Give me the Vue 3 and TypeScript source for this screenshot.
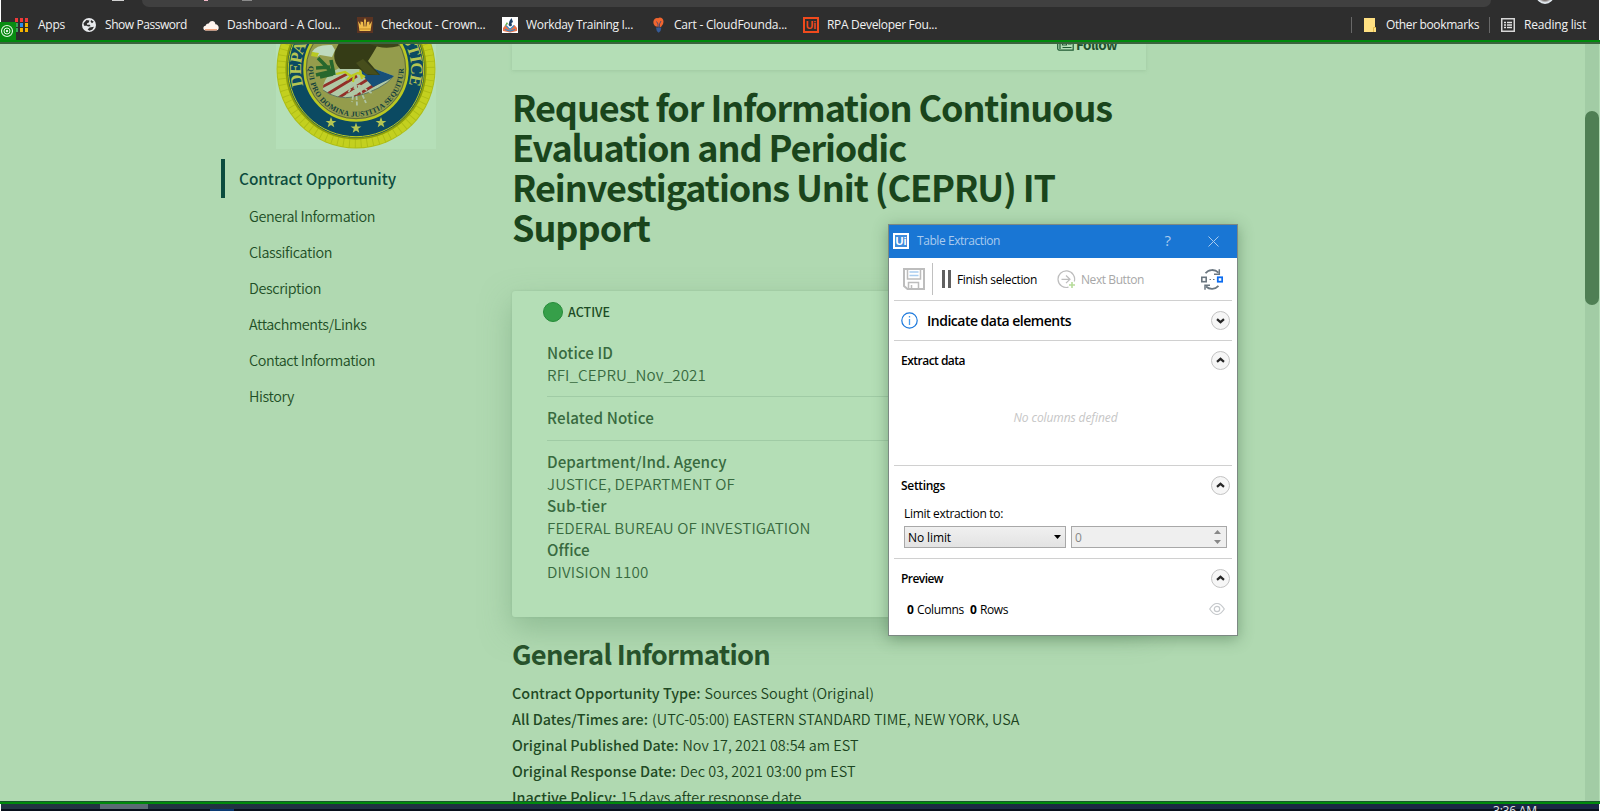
<script setup lang="ts">
import type { Directive } from 'vue'

interface Field { label: string; lw: number; value: string; vw: number }

// Tracks a line of text out or in so that it spans the given width.
const vFit: Directive<HTMLElement, number> = {
  mounted(el, { value }) {
    const count = (el.textContent ?? '').length
    const natural = el.getBoundingClientRect().width
    if (count > 0) el.style.letterSpacing = `${(value - natural) / count}px`
  },
}

const sections = [
  { name: 'General Information', w: 126 },
  { name: 'Classification', w: 83 },
  { name: 'Description', w: 72 },
  { name: 'Attachments/Links', w: 117.5 },
  { name: 'Contact Information', w: 126 },
  { name: 'History', w: 45 },
]

const titleLines = [
  { text: 'Request for Information Continuous', w: 600 },
  { text: 'Evaluation and Periodic', w: 394 },
  { text: 'Reinvestigations Unit (CEPRU) IT', w: 543 },
  { text: 'Support', w: 138 },
]

const agency: Field[] = [
  { label: 'Department/Ind. Agency', lw: 179.5, value: 'JUSTICE, DEPARTMENT OF', vw: 188 },
  { label: 'Sub-tier', lw: 59.5, value: 'FEDERAL BUREAU OF INVESTIGATION', vw: 263.5 },
  { label: 'Office', lw: 42.5, value: 'DIVISION 1100', vw: 101.5 },
]

const facts: Field[] = [
  { label: 'Contract Opportunity Type:', lw: 188.5, value: 'Sources Sought (Original)', vw: 169.5 },
  { label: 'All Dates/Times are:', lw: 136, value: '(UTC-05:00) EASTERN STANDARD TIME, NEW YORK, USA', vw: 367.5 },
  { label: 'Original Published Date:', lw: 166.5, value: 'Nov 17, 2021 08:54 am EST', vw: 176 },
  { label: 'Original Response Date:', lw: 164, value: 'Dec 03, 2021 03:00 pm EST', vw: 175.5 },
  { label: 'Inactive Policy:', lw: 104.5, value: '15 days after response date', vw: 181 },
]

const appColors = ['#f03a3a', '#f03a3a', '#f03a3a', '#3aa757', '#2a8cf0', '#f5b400', '#3aa757', '#f5b400', '#f5b400']
const stars = [[55, 133.5], [80, 139], [105, 133.5]]
const starPath = 'M0-5.5 1.4-1.6 5.4-1.6 2.2.8 3.3 4.7 0 2.4-3.3 4.7-2.2.8-5.4-1.6-1.4-1.6Z'
</script>

<template>
  <div class="screen">
    <header class="browser">
      <div class="toolbar">
        <i class="home"></i>
        <div class="address"><i class="mark"></i><i class="dots"></i></div>
        <i class="avatar"></i>
      </div>
      <nav class="bookmarks">
        <a class="bm apps">
          <svg width="13" height="14" viewBox="0 0 13 14">
            <rect v-for="(c, i) in appColors" :key="i" :x="(i % 3) * 5" :y="Math.floor(i / 3) * 5" width="3" height="4" :fill="c" />
          </svg><span v-fit="27">Apps</span>
        </a>
        <a class="bm show">
          <svg width="14" height="14" viewBox="0 0 14 14"><circle cx="7" cy="7" r="7" fill="#e8eaed" /><path d="M1.500 5.200 4.500 2 7.400 2.600 6.800 4.600 4.900 5.500 5.100 6.800 7.900 6.700 8.500 8.300 6 8.600 4.900 7.800 2 7.700ZM9 2l2.800 1.800L10 5.200 8.600 3.800ZM7.500 9.500l4.500-.8-1.600 2.900L7.500 12.700 5.600 11.500Z" fill="#2e2e2e" /></svg>
          <span v-fit="82">Show Password</span>
        </a>
        <a class="bm dash">
          <svg width="16" height="11" viewBox="0 0 16 11"><path d="M3 10.500C-.6 10.500-.3 6 2.600 5.800 3.200 3.800 4.800 3.200 5.800 3.600 7.400-.2 12.200.6 12.400 4.200 16.600 4.400 16.800 10.500 13 10.500Z" fill="#fff4ee" /><path d="M2 9.700h12" stroke="#f0a27c" stroke-width="1.400" /></svg>
          <span v-fit="113.5">Dashboard - A Clou...</span>
        </a>
        <a class="bm crown">
          <svg width="16" height="16" viewBox="0 0 16 16"><rect width="16" height="16" fill="#5b3422" /><path d="M1 4 3.600 8 3.600 4.500 6 5 6.600 9.500 7.400 9.500 7 3.500 8 1 9 3.500 8.600 9.500 9.400 9.500 10 5 12.400 4.500 12.400 8 15 4 13.500 14h-11Z" fill="#f2bd4b" /><path d="M2.500 12h11" stroke="#c58a24" /></svg>
          <span v-fit="104.5">Checkout - Crown...</span>
        </a>
        <a class="bm work">
          <svg width="16" height="16" viewBox="0 0 16 16"><rect width="16" height="16" fill="#fff" /><path d="M1 11 3.500 8l4.500 5 4.500-5 2.500 3v3L8 15.500 1 14Z" fill="#e8734a" /><path d="m3 12.500 5 1.500 5-1.500M4 8.500l4 4 4-4" stroke="#3b8ac4" stroke-width="1.200" fill="none" /><path d="M6.500 8 7.500 4 9.500 1l1.500 4-1.500 1 .5 2.500L8 9.500Z" fill="#1d4066" /><path d="m2.500 9 2.500-4 1 2Z" fill="#5da845" /></svg>
          <span v-fit="107">Workday Training I...</span>
        </a>
        <a class="bm cart">
          <svg width="11" height="16" viewBox="0 0 11 16"><path d="M3 9.500C.5 8 0 5.500.6 3.800 1.200 1.500 3.500.4 5 1.200 7-.3 10.400 1 10.500 4.500 10.500 7 9 8.500 8 10Z" fill="#f0652f" /><path d="M3.500 4.500 5 7v3h1.500V7L8 4" stroke="#5c4a65" fill="none" /><path d="M3 10.500h5.300L7.500 14 5.600 15.800 3.800 14Z" fill="#365a96" /></svg>
          <span v-fit="113">Cart - CloudFounda...</span>
        </a>
        <a class="bm rpa">
          <span class="ui-red">Ui</span><span v-fit="110">RPA Developer Fou...</span>
        </a>
        <div class="right">
          <a class="bm other">
            <svg width="12" height="14" viewBox="0 0 12 14"><path d="M0 0h11v9h1v5H0Z" fill="#ffe082" /><path d="M9.500 14V9.500H12" stroke="#e0b94b" fill="none" /></svg>
            <span v-fit="93">Other bookmarks</span>
          </a>
          <a class="bm reading">
            <svg width="14" height="14" viewBox="0 0 14 14"><rect x=".75" y=".75" width="12.500" height="12.500" fill="none" stroke="#d7d7d7" stroke-width="1.500" /><path d="M3 4.500h2M3 7h2M3 9.500h2M6 4.500h5M6 7h5M6 9.500h5" stroke="#e4e4e4" stroke-width="1.300" /></svg>
            <span v-fit="62">Reading list</span>
          </a>
        </div>
      </nav>
      <svg class="target" width="16" height="18" viewBox="0 0 16 18"><rect width="16" height="18" fill="#098c12" /><g fill="none" stroke="#e4f5e4"><circle cx="7" cy="9" r="5.500" stroke-width="1.100" /><circle cx="7" cy="9" r="3" /></g><circle cx="7" cy="9" r="1.200" fill="#e4f5e4" /></svg>
    </header>
    <div class="edge top"></div>

    <div class="page">
      <aside>
        <div class="seal">
          <svg width="160" height="160" viewBox="0 0 160 160">
            <defs>
              <path id="outer-arc" d="M27.500 96.500A55 55 0 1 1 132.500 96.500" />
              <path id="inner-arc" d="M32.500 77A47.600 47.600 0 1 0 127.500 77" />
              <clipPath id="shield-clip"><path d="M47 101Q46 82 80 73L118 87Q106 101 78 108 60 111 47 101Z" /></clipPath>
            </defs>
            <rect width="160" height="160" fill="#b5dfb8" />
            <circle cx="80" cy="80" r="79.500" fill="#aebd16" />
            <circle cx="80" cy="80" r="74.500" fill="none" stroke="#c3d01f" stroke-width="8" stroke-dasharray="5 .9" />
            <circle cx="80" cy="80" r="69.500" fill="#0b4a62" stroke="#8d9e0b" stroke-width="2" />
            <circle cx="80" cy="80" r="67.700" fill="none" stroke="#bccb21" />
            <circle cx="80" cy="80" r="51.500" fill="#949c4c" stroke="#bac821" stroke-width="2.500" />
            <circle cx="80" cy="80" r="49.700" fill="none" stroke="#46592c" stroke-width=".7" />
            <text class="outer"><textPath href="#outer-arc" textLength="205" lengthAdjust="spacing">DEPARTMENT OF JUSTICE</textPath></text>
            <g clip-path="url(#shield-clip)">
              <rect x="40" y="65" width="80" height="50" fill="#b0c9a6" />
              <path d="m42 100 29-15m-23 22 33-20m-22 24 35-22m-24 24 40-24m-26 22 34-19" stroke="#922f28" stroke-width="2.700" />
              <path d="M82 65 125 72 118 88 97 98 86 86Z" fill="#174f79" />
            </g>
            <path d="M47 101Q60 111 78 108 106 101 118 87" fill="none" stroke="#5f7960" />
            <path d="M59 62 66 48 106 48Q98 63 92 72L104 86 92 86 83 80 64 80Q56 71 59 62Z" fill="#353c16" />
            <path d="M88 52Q104 62 123 57L121 51H90Z" fill="#3d4519" />
            <path d="m80 74 7-4 16 16-13-1Z" fill="#474e1c" />
            <path d="M36 63Q40 55 56 56L59 61 56 68 44 66 41 68 42 65Z" fill="#bed9bd" />
            <path d="m36 63 7 1-2 4-6-1Z" fill="#b9ca22" />
            <path d="m42 69 6 6 10 11m-3-15 3 15M40 79l14-1m-14 8 17-4m-13 6 13-3" stroke="#27672d" stroke-width="3.600" fill="none" />
            <path d="m60 85 9-2 6 4-4 4m4-4 7-3 7 4m-11-2-1 7m7-12 2 9" stroke="#bdca20" stroke-width="2.200" fill="none" />
            <path d="m77 95-6 11m8-10-3 17m4-17 1 21m1-21 8 18m-7-18 14 9" stroke="#aec4a5" stroke-width="1.800" stroke-dasharray="4 1.500" />
            <text class="inner"><textPath href="#inner-arc" textLength="153" lengthAdjust="spacing">QUI PRO DOMINA JUSTITIA SEQUITUR</textPath></text>
            <path v-for="([x, y], i) in stars" :key="i" :d="starPath" :transform="`translate(${x} ${y})`" fill="#b4c552" />
          </svg>
        </div>
        <div class="current"><span v-fit="157">Contract Opportunity</span></div>
        <ul>
          <li v-for="s in sections" :key="s.name"><span v-fit="s.w">{{ s.name }}</span></li>
        </ul>
      </aside>

      <main>
        <div class="follow-card">
          <svg width="17" height="13" viewBox="0 0 17 13"><path d="M3 .7h13.200v11.500H2Q.7 12 .7 10.500V3H3v8M5.500 3.500h4v3.500h-4ZM11 3.500h3.500M11 6h3.500M5.500 9.500h9" fill="none" stroke="#1f5a33" stroke-width="1.200" /></svg>
          <span v-fit="41">Follow</span>
        </div>
        <h1><span v-for="t in titleLines" :key="t.text" v-fit="t.w">{{ t.text }}</span></h1>
        <section class="notice">
          <div class="status"><i></i><span v-fit="42">ACTIVE</span></div>
          <div class="block first">
            <b v-fit="66">Notice ID</b><span v-fit="159">RFI_CEPRU_Nov_2021</span>
          </div>
          <div class="block related"><b v-fit="107">Related Notice</b></div>
          <div class="block">
            <template v-for="f in agency" :key="f.label"><b v-fit="f.lw">{{ f.label }}</b><span v-fit="f.vw">{{ f.value }}</span></template>
          </div>
        </section>
        <h2><span v-fit="258">General Information</span></h2>
        <div v-for="f in facts" :key="f.label" class="fact"><b v-fit="f.lw">{{ f.label }}</b><span v-fit="f.vw">{{ f.value }}</span></div>
      </main>
      <div class="scroll"><i></i></div>
    </div>

    <div class="edge bottom"></div>
    <footer><i class="task"></i><i class="tray"></i><span class="clock">3:36 AM</span></footer>

    <div class="dialog">
      <div class="caption">
        <span class="ui-white">Ui</span><span v-fit="83" class="name">Table Extraction</span>
        <span class="help">?</span>
        <svg width="11" height="11" viewBox="0 0 11 11"><path d="m.5.5 10 10m0-10-10 10" stroke="#a9cbee" /></svg>
      </div>
      <div class="tools">
        <svg class="save" width="22" height="22" viewBox="0 0 22 22"><path d="M1 1h20v20H4.500L1 18Z" fill="none" stroke="#bdbdbd" stroke-width="2" /><path d="M4.500 1v10h13V1M5.500 21v-6.500h10V21M8.500 17v4" fill="none" stroke="#bdbdbd" stroke-width="1.500" /><path d="M6.500 4h9M6.500 7.500h9" stroke="#a9cdf0" stroke-width="1.600" /></svg>
        <i class="divider"></i><i class="pause"></i>
        <span v-fit="80" class="finish">Finish selection</span>
        <svg class="next" width="19" height="19" viewBox="0 0 19 19"><path d="M11.500 17.200A8.300 8.300 0 1 1 17.300 11.500M4.500 9.300h8M9 5.500l4 3.800-4 3.800" fill="none" stroke="#bdbdbd" stroke-width="1.200" /><path d="M15 12v6M12 15h6" stroke="#b6dc9a" stroke-width="1.600" /></svg>
        <span v-fit="63" class="disabled">Next Button</span>
        <svg class="sync" width="22" height="21" viewBox="0 0 22 21"><path d="M4.500 4.300C7.500.3 13.500-.2 17.500 3.600M17.500 16.900c-3.500 3.800-9 3.800-12.500.6" fill="none" stroke="#6b7780" stroke-width="1.800" /><path d="M18.300.3V5.200H13M4 20.800V16.200H9" fill="none" stroke="#6b7780" stroke-width="1.500" /><rect x=".8" y="8.300" width="4.400" height="4.400" fill="#fff" stroke="#6b7780" stroke-width="1.600" /><path d="M8.500 10.500H10M12 10.500h1.500" stroke="#6b7780" /><rect x="16.800" y="8.300" width="4.400" height="4.400" fill="#fff" stroke="#0b6cf0" stroke-width="1.800" /></svg>
      </div>
      <div class="row indicate">
        <svg width="17" height="17" viewBox="0 0 17 17"><circle cx="8.500" cy="8.500" r="7.700" fill="none" stroke="#1b78dc" stroke-width="1.200" /><path d="M8.500 7v6M8.500 4v1.600" stroke="#4a9cec" stroke-width="1.300" /></svg>
        <strong v-fit="144">Indicate data elements</strong>
        <svg class="fold" width="19" height="19" viewBox="0 0 19 19"><circle cx="9.500" cy="9.500" r="9" /><path d="m6 8.200 3.500 3 3.500-3" /></svg>
      </div>
      <div class="extract">
        <div class="row">
          <strong v-fit="64">Extract data</strong>
          <svg class="fold" width="19" height="19" viewBox="0 0 19 19"><circle cx="9.500" cy="9.500" r="9" /><path d="m6 10.800 3.500-3 3.500 3" /></svg>
        </div>
        <div class="empty"><em v-fit="104">No columns defined</em></div>
      </div>
      <div class="settings">
        <div class="row">
          <strong v-fit="44">Settings</strong>
          <svg class="fold" width="19" height="19" viewBox="0 0 19 19"><circle cx="9.500" cy="9.500" r="9" /><path d="m6 10.800 3.500-3 3.500 3" /></svg>
        </div>
        <div class="limit"><span v-fit="99">Limit extraction to:</span></div>
        <div class="inputs">
          <div class="select"><span v-fit="43">No limit</span><svg width="7" height="4" viewBox="0 0 7 4"><path d="M0 0h7L3.500 4Z" /></svg></div>
          <div class="number"><span>0</span><svg width="7" height="14" viewBox="0 0 7 14"><path d="M0 4h7L3.500 0ZM0 10h7L3.500 14Z" fill="#888" /></svg></div>
        </div>
      </div>
      <div class="preview">
        <div class="row">
          <strong v-fit="42">Preview</strong>
          <svg class="fold" width="19" height="19" viewBox="0 0 19 19"><circle cx="9.500" cy="9.500" r="9" /><path d="m6 10.800 3.500-3 3.500 3" /></svg>
        </div>
        <div class="counts">
          <b>0</b><span v-fit="47" class="cols">Columns</span><b>0</b><span v-fit="28">Rows</span>
          <svg width="16" height="12" viewBox="0 0 16 12"><path d="M.7 6Q8-5 15.300 6 8 17 .7 6Z" fill="none" stroke="#c6c9cc" stroke-width="1.200" /><circle cx="8" cy="6" r="2.700" fill="none" stroke="#c6c9cc" stroke-width="1.200" /></svg>
        </div>
      </div>
    </div>
  </div>
</template>

<style>
body { margin: 0; overflow: hidden; }
</style>

<style scoped>
* { box-sizing: border-box; }
.screen { position: relative; width: 1600px; height: 811px; display: flex; flex-direction: column; overflow: hidden; background: #b0d9b1; font: 12px/16px "Open Sans", "Noto Sans", sans-serif; }
span, b, strong, em { display: inline-block; white-space: nowrap; }
svg { display: block; flex: none; }
i { display: block; flex: none; }

.browser { position: relative; height: 40px; flex: none; background: #2e2e2e; border: solid #fff; border-width: 0 1px; color: #f2f2f2; }
.toolbar { display: flex; height: 7px; overflow: hidden; }
.home { width: 12px; height: 1px; margin-left: 111px; background: #d0d0d0; }
.address { width: 1349px; height: 7px; margin-left: 18px; padding-left: 62px; display: flex; gap: 34px; background: #404040; border-radius: 0 0 14px 14px; }
.mark { width: 4px; height: 1px; background: #f2b8c8; }
.dots { width: 10px; height: 1px; background: #8a8a8a; }
.avatar { width: 18px; height: 18px; margin: -14px 0 0 45px; border-radius: 50%; background: radial-gradient(circle, #d9743a 20%, #3a2218 30%, #dfe6ec 60%); }
.bookmarks { display: flex; align-items: center; height: 33px; padding: 3px 12px 0 14px; }
.bm { display: flex; align-items: center; height: 20px; }
.apps { width: 67px; gap: 10px; }
.show { width: 121px; gap: 9px; }
.dash { width: 154px; gap: 8px; }
.crown { width: 145px; gap: 8px; }
.work { width: 151px; gap: 8px; }
.cart { width: 150px; gap: 10px; }
.rpa { gap: 8px; }
.ui-red { width: 16px; height: 16px; border: 2px solid #f04a1d; color: #f04a1d; font: bold 10.5px/12px "Liberation Sans", sans-serif; text-align: center; }
.right { display: flex; margin-left: auto; }
.other, .reading { height: 16px; border-left: 1px solid #686868; }
.other { width: 138px; padding-left: 12px; gap: 10px; }
.reading { width: 98px; padding-left: 11px; gap: 9px; }
.target { position: absolute; left: -1px; top: 22px; }

.edge { flex: none; background: #008a0c; }
.edge.top { height: 4px; border-bottom: 2px solid #3a643d; }
.edge.bottom { height: 3px; border-top: 1px solid #17582b; }

.page { display: flex; height: 757px; flex: none; overflow: hidden; font-family: "Noto Sans CJK SC", sans-serif; }
aside { width: 512px; flex: none; padding-left: 221px; }
.seal { width: 160px; height: 105px; margin-left: 55px; display: flex; align-items: flex-end; overflow: hidden; }
.outer { font: bold 17px "Liberation Serif", serif; fill: #b5c552; }
.inner { font: bold 7.5px "Liberation Serif", serif; fill: #123f3c; }
.current { height: 39px; margin-top: 10px; padding-left: 14px; border-left: 4px solid #0b4c3e; color: #0c4b3d; font-size: 15.4px; font-weight: 500; line-height: 39px; }
ul { margin: 0; padding: 0 0 0 28px; list-style: none; }
li { height: 36px; color: #1f4f26; font-size: 14.4px; font-weight: 350; line-height: 36px; }

main { width: 634px; flex: none; }
.follow-card { display: flex; height: 26px; padding-left: 545px; background: #b4deb6; box-shadow: 0 1px 3px #8fbb9380; color: #214f2c; font-size: 13.5px; font-weight: 700; }
.follow-card svg { margin: -6px 2px 0 0; }
.follow-card span { height: 14px; line-height: 1px; }
h1 { margin: 16px 0 0; display: flex; flex-direction: column; align-items: flex-start; color: #1a451c; font-size: 36px; font-weight: 700; line-height: 40px; }
.notice { height: 326px; margin-top: 45px; padding: 11px 34px 0 35px; border-radius: 3px; background: #b4deb6; box-shadow: 0 0 2px #86b08b80, 0 12px 30px #6f9f7780; color: #386a3f; font-size: 15.2px; line-height: 22px; }
.status { display: flex; align-items: center; height: 20px; margin: 0 0 19px -4px; gap: 5px; color: #1c4c24; font-size: 12.5px; font-weight: 500; }
.status i { width: 20px; height: 20px; border: 1px solid #268b39; border-radius: 50%; background: #369f49; }
.block { display: flex; flex-direction: column; align-items: flex-start; padding-top: 9px; }
.block b, .fact b { font-weight: 500; }
.block span { font-weight: 350; }
.first { height: 56px; padding: 0; border-bottom: 1px solid #a0cba5; }
.related { height: 44px; border-bottom: 1px solid #a0cba5; }
h2 { margin: 18px 0 9px; color: #27522b; font-size: 27.3px; font-weight: 700; line-height: 36px; }
.fact { display: flex; height: 26px; gap: 4px; color: #1f4a24; font-size: 14.4px; line-height: 26px; }
.fact span { font-weight: 350; color: #1b4420; }
.scroll { width: 15px; margin-left: auto; padding-top: 67px; background: #a2cca5; border-right: 1px solid #b4deb6; }
.scroll i { width: 14px; height: 194px; border-radius: 7px; background: #4f7f54; }

footer { display: flex; height: 7px; flex: none; overflow: hidden; background: linear-gradient(#0000 5px, #08101c 5px), linear-gradient(90deg, #223441, #1a2744 80%); border: solid #fff; border-width: 0 1px; }
.task { width: 48px; height: 5px; margin-left: 99px; background: #5a6a74; }
.tray { width: 24px; height: 2px; margin: 5px 0 0 62px; background: #0b3a73; }
.clock { margin: -1px 0 0 1259px; color: #e3e6ec; font-size: 12px; line-height: 16px; letter-spacing: -.2px; }

.dialog { position: absolute; left: 888px; top: 224px; width: 350px; height: 412px; border: 1px solid #7c8983; background: #fff; box-shadow: 0 3px 14px #315c3870; color: #000; }
.caption { display: flex; align-items: center; height: 33px; padding: 0 18px 1px 4px; background: #1976d4; color: #a9cbee; }
.ui-white { width: 16px; height: 16px; border: 2px solid #fff; background: #3e8cdc; color: #fff; font: bold 11px/12px "Liberation Sans", sans-serif; text-align: center; }
.name { margin-left: 8px; }
.help { margin: 0 37px 0 auto; font-size: 15px; line-height: 14px; height: 16px; }
.tools { display: flex; align-items: center; height: 43px; margin: 0 5px; border-bottom: 1px solid #d0d0d0; }
.save { margin-left: 9px; }
.divider { width: 1px; height: 32px; margin-left: 7px; background: #c0c0c0; }
.pause { width: 9px; height: 18px; margin: 0 6px 0 9px; border: solid #606060; border-width: 0 3px; }
.finish, .disabled { padding-top: 1px; }
.next { margin-left: 20px; }
.disabled { margin-left: 5px; color: #a7a7a7; }
.sync { margin: 0 9px 0 auto; }
.row { display: flex; align-items: center; height: 39px; margin: 0 7px 0 12px; }
.row strong { font-weight: 600; padding-top: 1px; }
.fold { margin-left: auto; fill: #f6f6f6; stroke: #c3c3c3; }
.fold path { fill: none; stroke: #262626; stroke-width: 2.2; }
.indicate { height: 40px; margin: 0 5px; padding: 0 2px 0 7px; border-bottom: 1px solid #d0d0d0; font-size: 14px; }
.indicate strong { margin-left: 9px; }
.extract { height: 125px; margin: 0 5px; border-bottom: 1px solid #d0d0d0; }
.extract .row, .settings .row, .preview .row { margin: 0 2px 0 7px; }
.empty { padding: 30px 0 0 5px; text-align: center; color: #c6c6c6; }
.settings { height: 93px; margin: 0 5px; border-bottom: 1px solid #d0d0d0; }
.limit { height: 21px; padding: 1px 0 0 10px; }
.inputs { display: flex; gap: 5px; margin-left: 10px; }
.select, .number { display: flex; align-items: center; justify-content: space-between; height: 22px; border: 1px solid #a8a8a8; }
.inputs span { padding-top: 1px; }
.select { width: 162px; padding: 0 4px 0 3px; background: linear-gradient(#f0f0f0, #e3e3e3); }
.number { width: 156px; padding: 0 5px 0 3px; background: #efefef; color: #888; }
.preview { margin: 0 5px; }
.counts { display: flex; align-items: center; height: 24px; padding: 0 7px 0 13px; }
.counts b { width: 10px; }
.cols { margin-right: 6px; }
.counts svg { margin-left: auto; margin-top: -2px; }
</style>
